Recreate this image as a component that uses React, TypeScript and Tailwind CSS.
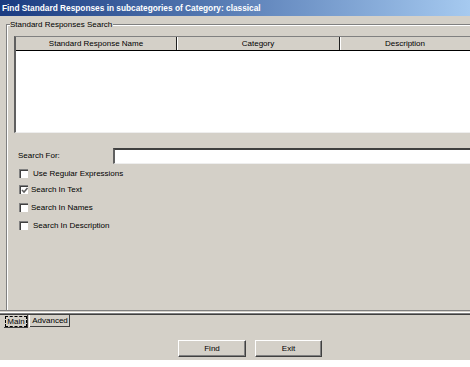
import type { ReactNode } from "react"

const font = { fontFamily: '"Liberation Sans", Arial, sans-serif' }

function CheckBox({ checked = false, label, textGap, top }: { checked?: boolean; label: string; textGap: string; top: string }) {
  return (
    <div className={`${top} flex h-[9px] items-center`}>
      <div className="relative h-[9px] w-[9px] border-t border-l border-[#808080] bg-white shadow-[inset_1px_1px_0_#404040]">
        {checked && (
          <svg viewBox="0 0 9 9" className="absolute inset-0 h-[9px] w-[9px]">
            <path d="M2 4 L4 6 L7.5 2" fill="none" stroke="#606060" strokeWidth="1.6" />
          </svg>
        )}
      </div>
      <span className={`${textGap} text-[8px] leading-none text-black`}>{label}</span>
    </div>
  )
}

function Button({ children, width }: { children: ReactNode; width: string }) {
  return (
    <button
      type="button"
      className={`${width} flex h-[17px] items-center justify-center border-t border-l border-r border-b border-t-white border-l-white border-r-[#404040] border-b-[#404040] bg-[#d4d0c8] text-[8px] text-black shadow-[inset_-1px_-1px_0_#808080]`}
    >
      {children}
    </button>
  )
}

export default function App() {
  return (
    <div className="flex h-[367px] w-[470px] flex-col overflow-hidden bg-[#d4d0c8]" style={font}>
      <div className="flex h-[16px] shrink-0 items-center bg-gradient-to-r from-[#1a3a80] to-[#a6caf0] pl-[2px]">
        <span className="whitespace-nowrap text-[8.3px] font-bold leading-none text-white">
          Find Standard Responses in subcategories of Category: classical
        </span>
      </div>

      <div className="flex h-[294px] shrink-0 flex-col pl-[6px] pt-[8px]">
        <div className="relative flex flex-1 flex-col border-t border-l border-[#808080] pl-[7px] pt-[11px] shadow-[inset_1px_1px_0_#ffffff]">
          <span className="absolute left-[3px] top-[-4px] bg-[#d4d0c8] pr-[1px] text-[8px] leading-none text-black">
            Standard Responses Search
          </span>

          <div className="flex h-[97px] flex-col border-t border-l-2 border-t-[#808080] border-l-[#606060] border-b border-b-[#eeeeee]">
            <div className="flex h-[14px] border-b border-black bg-[#d4d0c8] text-[8px] text-black">
              <div className="flex w-[161px] items-center justify-center border-r border-[#202020]">Standard Response Name</div>
              <div className="flex w-[163px] items-center justify-center border-r border-[#202020] shadow-[inset_1px_0_0_#ffffff]">Category</div>
              <div className="flex flex-1 items-center justify-center shadow-[inset_1px_0_0_#ffffff]">Description</div>
            </div>
            <div className="flex-1 bg-white" />
          </div>

          <div className="mt-[14px] flex h-[17px] items-center">
            <span className="w-[99px] pl-[4px] text-[8px] text-black">Search For:</span>
            <div className="h-[16px] flex-1 border-t-2 border-l-2 border-t-[#404040] border-l-[#606060] border-b border-b-[#eeeeee] bg-white" />
          </div>

          <div className="flex flex-col pl-[5px]">
            <CheckBox top="mt-[5px]" label="Use Regular Expressions" textGap="ml-[5px]" />
            <CheckBox top="mt-[7px]" checked label="Search In Text" textGap="ml-[3px]" />
            <CheckBox top="mt-[9px]" label="Search In Names" textGap="ml-[3px]" />
            <CheckBox top="mt-[9px]" label="Search In Description" textGap="ml-[5px]" />
          </div>
        </div>
      </div>

      <div className="flex h-[5px] shrink-0 flex-col">
        <div className="h-[1px] bg-[#808080]" />
        <div className="h-[1px] bg-[#d4d0c8]" />
        <div className="h-[1px] bg-white" />
        <div className="h-[1px] bg-[#808080]" />
        <div className="h-[1px] bg-[#404040]" />
      </div>

      <div className="flex h-[13px] shrink-0 items-start pl-[4px]">
        <div className="flex h-[13px] w-[24px] items-center justify-center bg-[#d4d0c8] shadow-[inset_-1px_-1px_0_#404040]">
          <span className="border border-dashed border-black px-[1px] text-[8px] leading-[9px] text-black">Main</span>
        </div>
        <div className="ml-[1px] flex h-[12px] w-[41px] items-center justify-center border-l border-white bg-[#d4d0c8] text-[8px] text-black shadow-[inset_-1px_-1px_0_#404040]">
          Advanced
        </div>
      </div>

      <div className="flex h-[12px] shrink-0" />

      <div className="flex h-[20px] shrink-0 items-start pl-[178px]">
        <Button width="w-[68px]">Find</Button>
        <div className="w-[9px]" />
        <Button width="w-[67px]">Exit</Button>
      </div>

      <div className="flex-1 bg-white" />
    </div>
  )
}
